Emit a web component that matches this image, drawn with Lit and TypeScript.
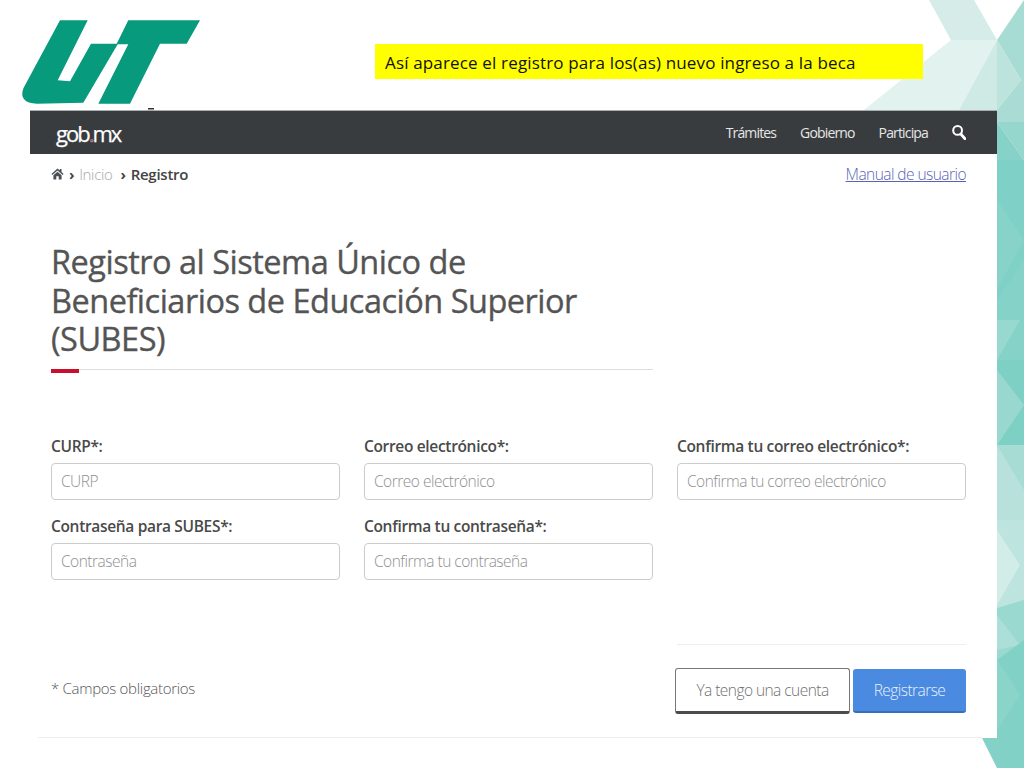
import { LitElement, html, css, svg } from "lit";
import { customElement } from "lit/decorators.js";

const F = [
  ["929,0 974,0 997,40 951,40", "#d6ece8"],
  ["951,40 997,40 959,110 864,110", "#e2f2ef"],
  ["997,40 997,110 959,110", "#cfe9e5"],
  ["997,40 1024,0 1024,80 1021,80", "#a7dcd5"],
  ["997,40 1021,80 997,110", "#bde3dd"],
  ["1021,80 1024,80 1024,122 997,122 997,110", "#aadcd5"],
  ["997,122 1024,122 1024,160", "#95d7cd"],
  ["997,122 1024,160 997,200", "#86d2c8"],
  ["997,160 1024,160 1024,300 997,300", "#7fd0c6"],
  ["997,200 1024,240 997,290", "#87d3c9"],
  ["997,300 1024,260 1024,360 997,360", "#85d2c8"],
  ["997,320 1020,320 997,360", "#98d9cf"],
  ["997,360 1024,360 1024,445 997,445", "#7ed0c5"],
  ["997,370 1024,405 997,445", "#99d8cf"],
  ["997,445 1024,445 1024,520 997,520", "#a6dcd4"],
  ["997,445 1024,490 1024,520 997,520", "#b9e1db"],
  ["997,520 1024,520 1024,610 997,610", "#bde4de"],
  ["997,530 1020,565 997,605", "#d2ece8"],
  ["997,608 1024,600 1024,660 997,660", "#9ad9d0"],
  ["997,615 1020,645 997,650", "#abdfd7"],
  ["997,660 1024,640 1024,768 997,768", "#82d1c7"],
  ["982,738 1000,738 1000,768 997,768", "#83d1c7"],
  ["997,660 1020,695 997,730", "#8bd4ca"],
];

@customElement("app-root")
export class AppRoot extends LitElement {
  static styles = css`
    :host {
      display: block;
      position: relative;
      width: 1024px;
      height: 768px;
      overflow: hidden;
      background: #fff;
      font-family: "Open Sans", "Liberation Sans", sans-serif;
      color: #545454;
    }
    .decor { position: absolute; inset: 0; width: 1024px; height: 768px; }
    .page { position: relative; display: flex; flex-direction: column; height: 768px; }
    .head { display: flex; height: 110px; flex: none; }
    .logo { width: 210px; height: 110px; flex: none; }
    .note {
      margin: 44px 0 0 165px;
      width: 538px;
      height: 35px;
      padding-left: 10px;
      background: #ffff00;
      color: #111;
      font-size: 17px;
      line-height: 37px;
      letter-spacing: 0.16px;
      white-space: nowrap;
    }
    .panel {
      margin-left: 30px;
      width: 967px;
      height: 628px;
      flex: none;
      box-sizing: border-box;
      background: #fff;
      border-top: 1px solid #a9adad;
      position: relative;
      display: flex;
      flex-direction: column;
    }
    nav {
      height: 43px;
      flex: none;
      background: #393c3e;
      display: flex;
      align-items: center;
      color: #e6e6e6;
      font-size: 14px;
      letter-spacing: -0.85px;
      padding: 0 31px 0 26px;
    }
    .brand {
      font-size: 22px;
      letter-spacing: -2px;
      color: #fff;
      -webkit-text-stroke: 0.25px #fff;
      margin-right: auto;
    }
    .brand i { color: #b5413f; font-style: normal; }
    .links { display: flex; align-items: center; }
    .links a { margin-right: 24px; }
    .links svg { display: block; }
    .crumbs {
      display: flex;
      justify-content: space-between;
      padding: 8px 31px 0 21px;
      font-size: 15px;
      line-height: 24px;
      height: 24px;
      letter-spacing: -0.35px;
    }
    .trail { display: flex; align-items: center; gap: 5px; }
    .trail svg { display: block; }
    .trail .sep { font-weight: 700; color: #444; }
    .trail .dim { color: #a8a8a8; font-weight: 300; margin-right: 3px; }
    .trail b { color: #444; font-weight: 600; letter-spacing: -0.25px; }
    .manual { color: #5a62b8; text-decoration: underline; font-weight: 300; font-size: 15.5px; letter-spacing: -0.55px; }
    h1 {
      margin: 57px 0 0 21px;
      width: 560px;
      font-size: 32.5px;
      line-height: 38.5px;
      font-weight: 400;
      -webkit-text-stroke: 0.35px #545454;
      letter-spacing: -0.5px;
      color: #545454;
    }
    .rule { margin: 10px 0 0 21px; width: 602px; height: 4px; position: relative; }
    .rule::before { content: ""; display: block; height: 1px; background: #ddd; }
    .rule::after { content: ""; position: absolute; left: 0; top: 0; width: 28px; height: 4px; background: #c8102e; }
    .grid {
      margin: 62px 31px 0 21px;
      display: grid;
      grid-template-columns: repeat(3, 289px);
      column-gap: 24px;
      row-gap: 15px;
    }
    .field { display: flex; flex-direction: column; gap: 6px; }
    label { font-size: 15.5px; line-height: 22px; font-weight: 600; color: #4a4a4a; letter-spacing: -0.33px; white-space: nowrap; }
    input {
      box-sizing: border-box;
      width: 289px;
      height: 37px;
      border: 1px solid #ccc;
      border-radius: 4px;
      padding: 0 9px;
      font: 300 15.5px "Open Sans", sans-serif;
      letter-spacing: -0.5px;
      background: #fff;
    }
    input::placeholder { color: #8f8f8f; opacity: 1; }
    .sep-line { margin: 64px 31px 0 647px; height: 1px; background: #eee; }
    .foot { margin-top: 23px; display: flex; align-items: center; padding: 0 31px 0 21px; }
    .req { margin-right: auto; padding-bottom: 5px; font-size: 15px; font-weight: 300; letter-spacing: -0.3px; color: #555; }
    .btn {
      box-sizing: border-box;
      height: 45px;
      border-radius: 3px;
      font-size: 15.5px;
      font-weight: 300;
      letter-spacing: -0.55px;
      display: flex;
      align-items: center;
      justify-content: center;
    }
    .ghost { width: 175px; height: 46px; margin-right: 3px; background: #fff; border: 1px solid #777; border-bottom: 3px solid #4c4c4c; color: #707070; }
    .primary { width: 113px; height: 44px; background: #4a8ae0; border-bottom: 2px solid #3a6fb8; color: #e8f1fc; }
    .bottom { position: absolute; left: 8px; right: 15px; bottom: 0; height: 1px; background: #eee; }
  `;

  render() {
    return html`
      <svg class="decor" viewBox="0 0 1024 768" aria-hidden="true">
        ${F.map(([p, c]) => svg`<polygon points=${p} fill=${c}></polygon>`)}
      </svg>
      <div class="page">
        <div class="head">
          <svg class="logo" viewBox="0 0 210 110" aria-label="UT">
            <path fill="#089a7c" d="M60 20.3H87.7L57.7 80.3L70 81.3L91 43.7H116.7L128.3 20.3H200L186.7 43.7H160L130 103.7H98.3L128.3 44.3H117.7L83.3 102.7L37 103.7Q18 103 23.5 88Z"></path>
            <rect x="148" y="108" width="6" height="1.5" fill="#333"></rect>
          </svg>
          <div class="note">Así aparece el registro para los(as) nuevo ingreso a la beca</div>
        </div>
        <div class="panel">
          <nav>
            <div class="brand">gob<i>.</i>mx</div>
            <div class="links">
              <a>Trámites</a><a>Gobierno</a><a>Participa</a>
              <svg width="14" height="15" viewBox="0 0 14 15">
                <circle cx="5.6" cy="5.4" r="4.4" fill="none" stroke="#fff" stroke-width="2"></circle>
                <path d="M8.8 9L13 13.8" stroke="#fff" stroke-width="2.8" stroke-linecap="round"></path>
              </svg>
            </div>
          </nav>
          <div class="crumbs">
            <div class="trail">
              <svg width="13" height="12" viewBox="0 0 13 12">
                <path fill="#4a4f55" d="M6.5 0.5L0.4 6L1.3 7L6.5 2.4L11.7 7L12.6 6L10.5 4.1V1H8.8V2.6ZM2.4 7.3V11.6H5.3V8.3H7.7V11.6H10.6V7.3L6.5 3.7Z"></path>
              </svg>
              <span class="sep">›</span><span class="dim">Inicio</span>
              <span class="sep">›</span><b>Registro</b>
            </div>
            <a class="manual">Manual de usuario</a>
          </div>
          <h1>Registro al Sistema Único de Beneficiarios de Educación Superior (SUBES)</h1>
          <div class="rule"></div>
          <div class="grid">
            <div class="field"><label>CURP*:</label><input placeholder="CURP" /></div>
            <div class="field"><label>Correo electrónico*:</label><input placeholder="Correo electrónico" /></div>
            <div class="field"><label>Confirma tu correo electrónico*:</label><input placeholder="Confirma tu correo electrónico" /></div>
            <div class="field"><label>Contraseña para SUBES*:</label><input placeholder="Contraseña" /></div>
            <div class="field"><label>Confirma tu contraseña*:</label><input placeholder="Confirma tu contraseña" /></div>
          </div>
          <div class="sep-line"></div>
          <div class="foot">
            <span class="req">* Campos obligatorios</span>
            <div class="btn ghost">Ya tengo una cuenta</div>
            <div class="btn primary">Registrarse</div>
          </div>
          <div class="bottom"></div>
        </div>
      </div>
    `;
  }
}
